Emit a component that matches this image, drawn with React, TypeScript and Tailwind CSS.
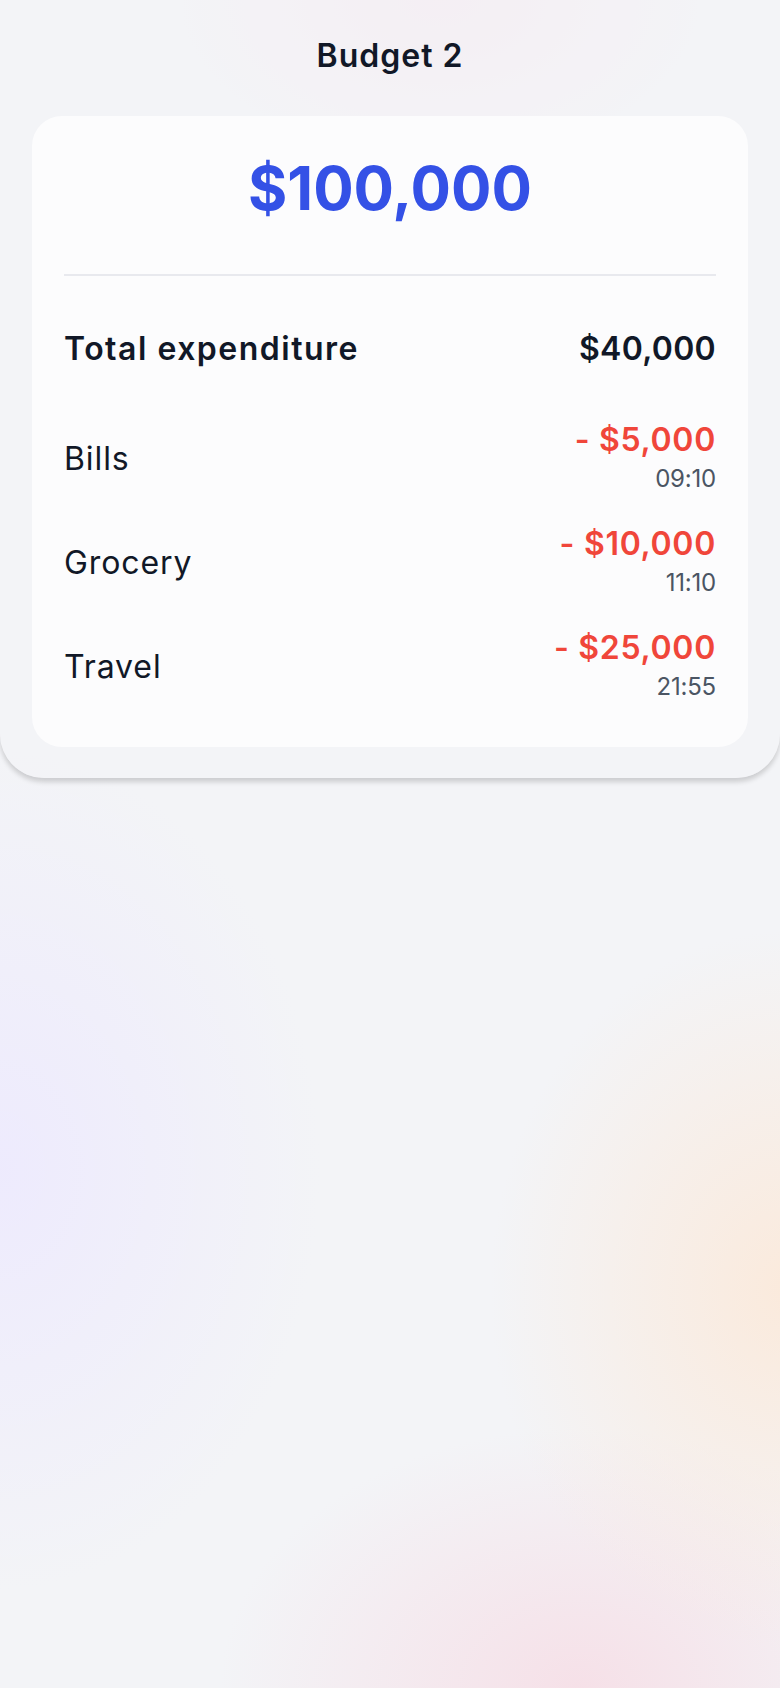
import React from "react";

const rows = [
  { label: "Bills", amount: "- $5,000", time: "09:10" },
  { label: "Grocery", amount: "- $10,000", time: "11:10" },
  { label: "Travel", amount: "- $25,000", time: "21:55" },
];

export default function App() {
  return (
    <div
      className="min-h-[1688px] w-full bg-[#f3f4f7] bg-[radial-gradient(ellipse_260px_160px_at_440px_0px,rgba(250,222,232,0.55),transparent),radial-gradient(ellipse_320px_420px_at_0px_1170px,rgba(236,232,255,0.8),transparent),radial-gradient(ellipse_300px_360px_at_790px_1290px,rgba(252,232,215,0.85),transparent),radial-gradient(ellipse_360px_260px_at_580px_1688px,rgba(246,222,230,0.9),transparent)]"
      style={{ fontFamily: "Inter, 'Noto Sans', sans-serif" }}
    >
      <div className="rounded-b-[44px] bg-[#f3f4f7]/60 pb-[31px] shadow-[0_4px_5px_rgba(0,0,0,0.16)]">
        <div className="flex h-[112px] items-center justify-center">
          <h1 className="text-[32px] font-semibold leading-[32px] tracking-[1px] text-[#111827]">Budget 2</h1>
        </div>
        <div className="mx-[32px] mt-[4px] rounded-[30px] bg-[#fcfcfd] px-[32px] pb-[41px] pt-[42px]">
          <div className="text-center text-[60px] font-bold leading-[60px] text-[#3451e6]">$100,000</div>
          <div className="mt-[56px] h-[2px] bg-[#e8e9ee]" />
          <div className="mt-[57px] flex items-center justify-between text-[32px] font-semibold leading-[32px] text-[#111827]">
            <span className="tracking-[1.5px]">Total expenditure</span>
            <span className="tracking-[0.3px]">$40,000</span>
          </div>
          <div className="mt-[55px] flex flex-col gap-[26px]">
            {rows.map((r) => (
              <div key={r.label} className="flex items-center justify-between">
                <span className="text-[32px] font-normal leading-[32px] tracking-[0.9px] text-[#111827]">{r.label}</span>
                <div className="flex flex-col items-end">
                  <span className="text-[32px] font-semibold leading-[40px] tracking-[0.7px] text-[#f0463a]">{r.amount}</span>
                  <span className="text-[24px] font-normal leading-[38px] tracking-[-0.2px] text-[#4b5563]">{r.time}</span>
                </div>
              </div>
            ))}
          </div>
        </div>
      </div>
    </div>
  );
}
